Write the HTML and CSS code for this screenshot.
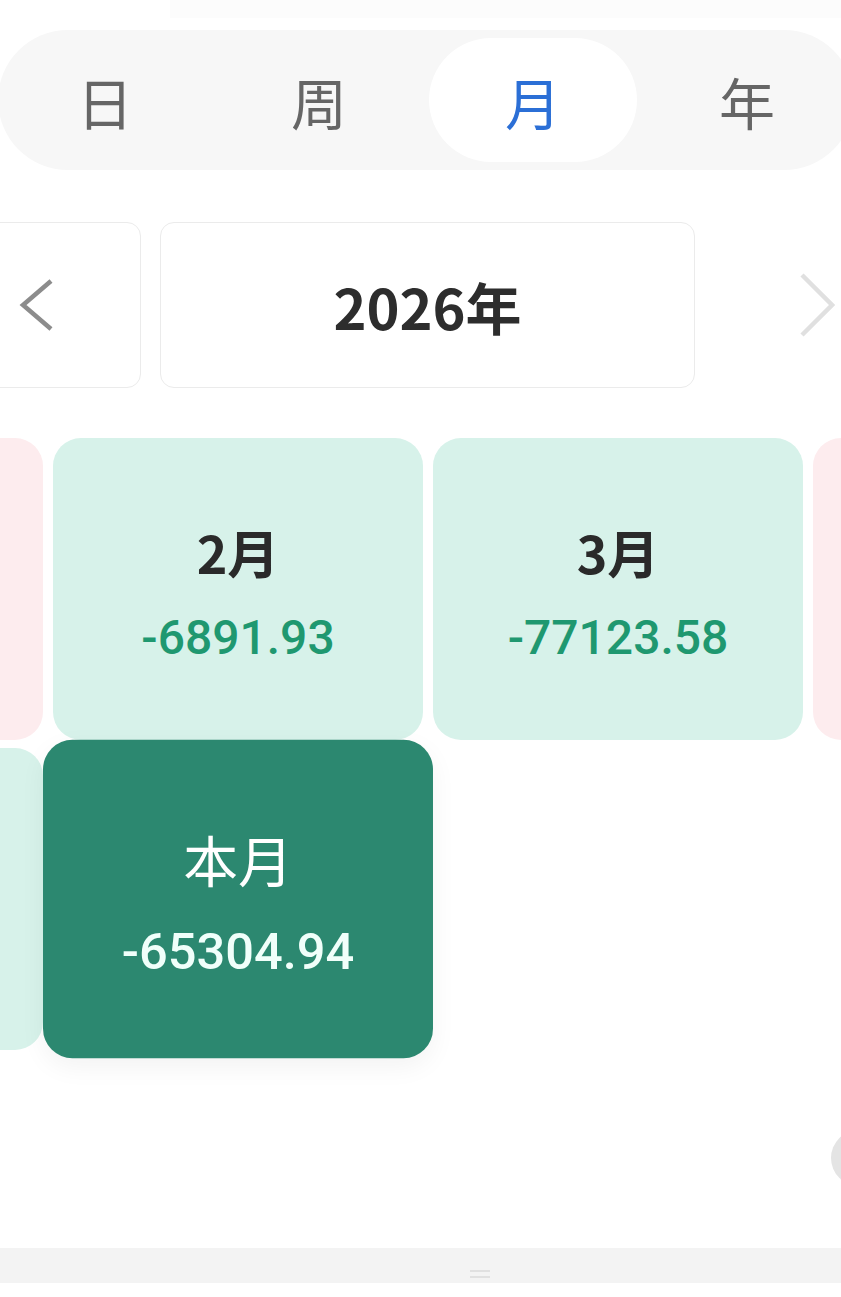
FILE: index.html
```html
<!DOCTYPE html>
<html lang="zh-CN">
<head>
    <meta charset="UTF-8">
    <meta name="viewport" content="width=device-width, initial-scale=1.0">
    <title>月度收支</title>
    <link rel="stylesheet" href="styles.css">
</head>
<body>
    <div class="top-fade"></div>

    <!-- 切换：日 / 周 / 月 / 年 -->
    <div class="tabs">
        <div class="tab">日</div>
        <div class="tab">周</div>
        <div class="tab tab-active">月</div>
        <div class="tab">年</div>
    </div>

    <!-- 年份切换 -->
    <div class="year-nav">
        <div class="nav-prev">
            <svg width="36" height="54" viewBox="0 0 36 54"><polyline points="33,3 5,27 33,51" fill="none" stroke="#8c8c8c" stroke-width="4.5"/></svg>
        </div>
        <div class="year-box">2026年</div>
        <div class="nav-next">
            <svg width="36" height="66" viewBox="0 0 36 66"><polyline points="3,3 33,33 3,63" fill="none" stroke="#e0e0e0" stroke-width="4.5"/></svg>
        </div>
    </div>

    <!-- 月份卡片 -->
    <div class="months">
        <div class="month month-pink"></div>
        <div class="month month-green">
            <span class="month-name">2月</span>
            <span class="month-amount">-6891.93</span>
        </div>
        <div class="month month-green">
            <span class="month-name">3月</span>
            <span class="month-amount">-77123.58</span>
        </div>
        <div class="month month-pink"></div>

        <div class="month month-green"></div>
        <div class="month month-current">
            <span class="month-name">本月</span>
            <span class="month-amount">-65304.94</span>
        </div>
    </div>

    <div class="float-btn"></div>

    <div class="bottom-bar">
        <div class="bar-handle"></div>
    </div>
</body>
</html>
```

FILE: styles.css
```css
html, body {
    overflow: hidden;
}
body {
    margin: 0;
    width: 841px;
    height: 1297px;
    background-color: #fff;
    font-family: "Noto Sans CJK SC", "Noto Sans", sans-serif;
    position: relative;
}
.top-fade {
    height: 18px;
    margin-left: 170px;
    background-color: #fcfcfc;
}

/* Abas */
.tabs {
    margin: 12px 0 0 -2px;
    width: 856px;
    height: 140px;
    box-sizing: border-box;
    padding: 8px 0;
    display: grid;
    grid-template-columns: repeat(4, 214px);
    background-color: #f7f7f7;
    border-radius: 70px;
}
.tab {
    display: flex;
    align-items: center;
    justify-content: center;
    margin: 0 3px;
    border-radius: 62px;
    font-size: 56px;
    color: #666;
}
.tab-active {
    background-color: #fff;
    color: #2b6fd6;
}

/* Ano */
.year-nav {
    display: flex;
    align-items: center;
    height: 166px;
    margin-top: 52px;
}
.nav-prev, .year-box {
    height: 100%;
    box-sizing: border-box;
    border: 1px solid #ebebeb;
    border-radius: 14px;
    display: flex;
    align-items: center;
}
.nav-prev {
    width: 161px;
    margin-left: -20px;
    padding-left: 37px;
}
.year-box {
    width: 535px;
    margin-left: 19px;
    justify-content: center;
    font-size: 56px;
    font-weight: 700;
    color: #2d2d2d;
}
.nav-next {
    margin-left: 104px;
    display: flex;
}

/* Meses */
.months {
    display: grid;
    grid-template-columns: repeat(4, 370px);
    grid-auto-rows: 302px;
    column-gap: 10px;
    row-gap: 8px;
    margin: 50px 0 0 -327px;
}
.month {
    border-radius: 28px;
    padding-top: 8px;
    box-sizing: border-box;
    display: flex;
    flex-direction: column;
    align-items: center;
    justify-content: center;
}
.month-pink {
    background-color: #fdecee;
}
.month-green {
    background-color: #d7f2ea;
}
.month-name {
    font-size: 52px;
    font-weight: 700;
    line-height: 64px;
    color: #2a2a2a;
}
.month-amount {
    margin-top: 26px;
    font-family: Roboto, "Noto Sans", sans-serif;
    font-size: 48px;
    font-weight: 500;
    line-height: 56px;
    color: #1f9870;
}
.month-current {
    background-color: #2c8870;
    transform: scale(1.054);
    box-shadow: 0 8px 24px rgba(0, 0, 0, 0.05);
}
.month-current .month-name {
    font-weight: 400;
    color: #fff;
}
.month-current .month-amount {
    margin-top: 28px;
    font-size: 48px;
    color: #f0fffa;
}

/* Botão flutuante (cortado) */
.float-btn {
    position: absolute;
    left: 831px;
    top: 1130px;
    width: 56px;
    height: 56px;
    border-radius: 50%;
    background-color: #e4e4e4;
}

.bottom-bar {
    margin-top: 198px;
    height: 35px;
    background-color: #f3f3f3;
    position: relative;
}
.bar-handle {
    position: absolute;
    left: 470px;
    top: 22px;
    width: 20px;
    height: 4px;
    border-top: 2px solid #e0e0e0;
    border-bottom: 2px solid #e0e0e0;
}
```
